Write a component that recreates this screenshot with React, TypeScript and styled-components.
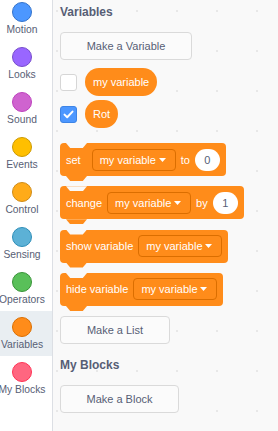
import React from 'react'
import styled, { createGlobalStyle } from 'styled-components'

const GlobalStyle = createGlobalStyle`
  html, body {
    margin: 0;
    padding: 0;
    background: #f9f9f9;
    font-family: "Liberation Sans", Helvetica, Arial, sans-serif;
  }
`

type Category = {
  name: string
  fill: string
  stroke: string
}

const categories: Category[] = [
  { name: 'Motion', fill: '#4c97ff', stroke: '#3373cc' },
  { name: 'Looks', fill: '#9966ff', stroke: '#774dcb' },
  { name: 'Sound', fill: '#cf63cf', stroke: '#bd42bd' },
  { name: 'Events', fill: '#ffbf00', stroke: '#cc9900' },
  { name: 'Control', fill: '#ffab19', stroke: '#cf8b17' },
  { name: 'Sensing', fill: '#5cb1d6', stroke: '#2e8eb8' },
  { name: 'Operators', fill: '#59c059', stroke: '#389438' },
  { name: 'Variables', fill: '#ff8c1a', stroke: '#db6e00' },
  { name: 'My Blocks', fill: '#ff6680', stroke: '#ff3355' },
]

const ORANGE = '#ff8c1a'
const ORANGE_DARK = '#db6e00'
const TEXT = '#575e75'

const Dropdown = ({ label = 'my variable' }: { label?: string }) => (
  <DropdownField>
    <span>{label}</span>
    <svg width="7" height="4" viewBox="0 0 7 4">
      <path d="M0 0 H7 L3.5 4 Z" fill="#fff" />
    </svg>
  </DropdownField>
)

export default function App() {
  return (
    <>
      <GlobalStyle />
      <Layout>
        <Sidebar>
          <CategoryList>
            {categories.map((c) => (
              <CategoryItem key={c.name} $selected={c.name === 'Variables'}>
                <Bubble $fill={c.fill} $stroke={c.stroke} />
                <CategoryLabel>{c.name}</CategoryLabel>
              </CategoryItem>
            ))}
          </CategoryList>
        </Sidebar>

        <Workspace>
          <SectionTitle>Variables</SectionTitle>
          <FlyoutButton $width={132}>Make a Variable</FlyoutButton>

          <ReporterList>
            <ReporterRow>
              <Checkbox />
              <Reporter>my variable</Reporter>
            </ReporterRow>
            <ReporterRow>
              <Checkbox $checked>
                <svg width="11" height="9" viewBox="0 0 11 9">
                  <path
                    d="M1.5 4.6 L4.2 7.2 L9.5 1.6"
                    stroke="#fff"
                    strokeWidth="2"
                    fill="none"
                    strokeLinecap="round"
                    strokeLinejoin="round"
                  />
                </svg>
              </Checkbox>
              <Reporter>Rot</Reporter>
            </ReporterRow>
          </ReporterList>

          <BlockStack>
            <Block>
              <BlockLabel $extra={6}>set</BlockLabel>
              <Dropdown />
              <BlockLabel>to</BlockLabel>
              <NumberInput>0</NumberInput>
            </Block>
            <Block>
              <BlockLabel>change</BlockLabel>
              <Dropdown />
              <BlockLabel>by</BlockLabel>
              <NumberInput>1</NumberInput>
            </Block>
            <Block>
              <BlockLabel>show variable</BlockLabel>
              <Dropdown />
            </Block>
            <Block>
              <BlockLabel>hide variable</BlockLabel>
              <Dropdown />
            </Block>
          </BlockStack>

          <FlyoutButton $width={110} $top={10}>Make a List</FlyoutButton>
          <SectionTitle $top={14}>My Blocks</SectionTitle>
          <FlyoutButton $width={119}>Make a Block</FlyoutButton>
        </Workspace>
      </Layout>
    </>
  )
}

const Layout = styled.div`
  display: flex;
  height: 431px;
  overflow: hidden;
`

const Sidebar = styled.nav`
  flex: 0 0 60px;
  margin-left: -8px;
  background: #ffffff;
  border-right: 1px solid #dcdfe4;
`

const CategoryList = styled.ul`
  list-style: none;
  margin: -4px 0 0;
  padding: 0;
`

const CategoryItem = styled.li<{ $selected?: boolean }>`
  height: 45px;
  box-sizing: border-box;
  padding-top: 6px;
  display: flex;
  flex-direction: column;
  align-items: center;
  background: ${({ $selected }) => ($selected ? '#e9eef2' : 'transparent')};
`

const Bubble = styled.div<{ $fill: string; $stroke: string }>`
  width: 20px;
  height: 20px;
  box-sizing: border-box;
  border-radius: 50%;
  background: ${({ $fill }) => $fill};
  border: 1px solid ${({ $stroke }) => $stroke};
`

const CategoryLabel = styled.span`
  margin-top: 1px;
  font-size: 10.3px;
  line-height: 13px;
  color: ${TEXT};
  white-space: nowrap;
`

const Workspace = styled.main`
  flex: 1;
  display: flex;
  flex-direction: column;
  align-items: flex-start;
  padding-left: 7px;
  background-color: #f9f9f9;
  background-image: radial-gradient(circle, #e8e8e8 0.8px, transparent 1.3px);
  background-size: 40px 40px;
  background-position: -16px -9px;
`

const SectionTitle = styled.h2<{ $top?: number }>`
  margin: ${({ $top }) => $top ?? 5}px 0 0;
  font-size: 12px;
  line-height: 14px;
  font-weight: 700;
  color: ${TEXT};
`

const FlyoutButton = styled.div<{ $width: number; $top?: number }>`
  margin-top: ${({ $top }) => $top ?? 13}px;
  width: ${({ $width }) => $width}px;
  height: 28px;
  box-sizing: border-box;
  display: flex;
  align-items: center;
  justify-content: center;
  border: 1px solid #dadada;
  border-radius: 4px;
  background: #fbfbfb;
  font-size: 11px;
  color: ${TEXT};
`

const ReporterList = styled.div`
  margin-top: 8px;
  display: flex;
  flex-direction: column;
  gap: 4px;
`

const ReporterRow = styled.div`
  display: flex;
  align-items: center;
  gap: 8px;
`

const Checkbox = styled.div<{ $checked?: boolean }>`
  width: 17px;
  height: 17px;
  box-sizing: border-box;
  border-radius: 3px;
  display: flex;
  align-items: center;
  justify-content: center;
  background: ${({ $checked }) => ($checked ? '#4c97ff' : '#ffffff')};
  border: 1px solid ${({ $checked }) => ($checked ? '#3d84e6' : '#d6d6d6')};
`

const Reporter = styled.div`
  height: 28px;
  padding: 0 8px;
  border-radius: 14px;
  display: flex;
  align-items: center;
  background: ${ORANGE};
  color: #ffffff;
  font-size: 11px;
`

const BlockStack = styled.div`
  margin-top: 15px;
  display: flex;
  flex-direction: column;
  align-items: flex-start;
  gap: 10.3px;
`

const Block = styled.div`
  position: relative;
  height: 33px;
  box-sizing: border-box;
  padding: 0 6px;
  display: flex;
  align-items: center;
  gap: 5px;
  background: ${ORANGE};
  border-radius: 4px;
  color: #ffffff;
  font-size: 11px;

  &::before,
  &::after {
    content: '';
    position: absolute;
    left: 6px;
    width: 21px;
    height: 5px;
    clip-path: polygon(0 0, 100% 0, 80% 100%, 20% 100%);
  }

  &::before {
    top: 0;
    background: #f9f9f9;
  }

  &::after {
    top: 100%;
    background: ${ORANGE};
  }
`

const BlockLabel = styled.span<{ $extra?: number }>`
  margin-right: ${({ $extra }) => $extra ?? 0}px;
  white-space: nowrap;
`

const DropdownField = styled.div`
  width: 84px;
  height: 22px;
  box-sizing: border-box;
  padding: 0 9px 0 7px;
  display: flex;
  align-items: center;
  justify-content: space-between;
  border: 1px solid ${ORANGE_DARK};
  border-radius: 4px;
  background: ${ORANGE};
  color: #ffffff;
  font-size: 11px;
`

const NumberInput = styled.div`
  width: 25px;
  height: 22px;
  display: flex;
  align-items: center;
  justify-content: center;
  border-radius: 11px;
  background: #ffffff;
  color: ${TEXT};
  font-size: 11px;
`
